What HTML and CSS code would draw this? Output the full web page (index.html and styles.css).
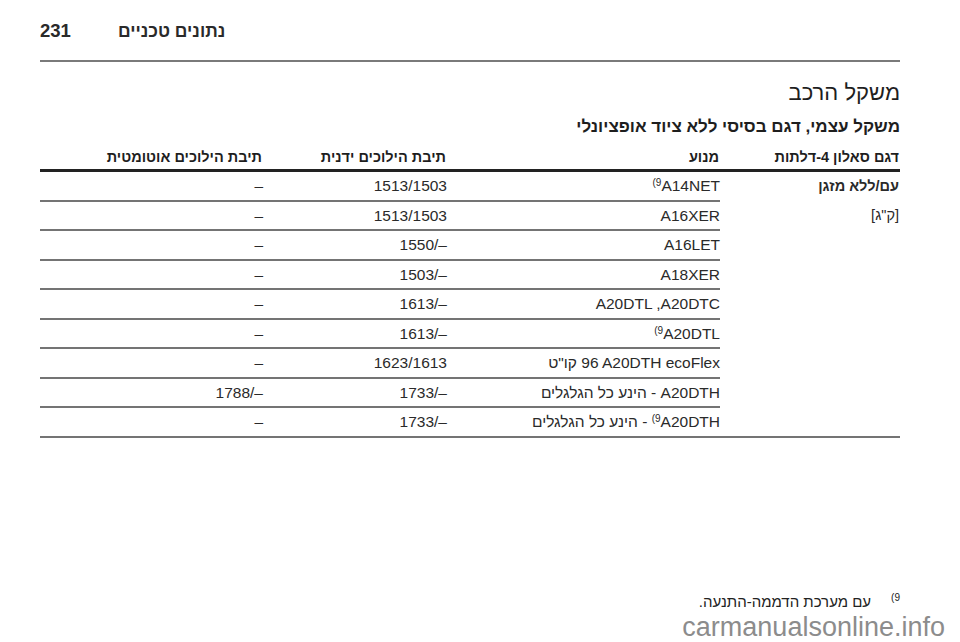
FILE: index.html
```html
<!DOCTYPE html>
<html lang="he">
<head>
<meta charset="utf-8">
<title>נתונים טכניים</title>
<link rel="stylesheet" href="styles.css">
</head>
<body>
<div class="page">
  <header class="running-head">
    <span class="page-no">231</span>
    <span class="chapter" dir="rtl">נתונים טכניים</span>
  </header>

  <h1 class="title">משקל הרכב</h1>
  <h2 class="subtitle">משקל עצמי, דגם בסיסי ללא ציוד אופציונלי</h2>

  <table class="weights">
    <colgroup>
      <col class="c-model">
      <col class="c-engine">
      <col class="c-manual">
      <col class="c-auto">
    </colgroup>
    <thead>
      <tr>
        <th>דגם סאלון 4-דלתות</th>
        <th>מנוע</th>
        <th>תיבת הילוכים ידנית</th>
        <th>תיבת הילוכים אוטומטית</th>
      </tr>
    </thead>
    <tbody>
      <tr>
        <td class="model" rowspan="9"><span class="model-name">עם/ללא מזגן</span><br>[ק"ג]</td>
        <td><span class="ltr"><sup>(9</sup>A14NET</span></td>
        <td><span class="ltr">1513/1503</span></td>
        <td>–</td>
      </tr>
      <tr>
        <td><span class="ltr">A16XER</span></td>
        <td><span class="ltr">1513/1503</span></td>
        <td>–</td>
      </tr>
      <tr>
        <td><span class="ltr">A16LET</span></td>
        <td><span class="ltr">1550/–</span></td>
        <td>–</td>
      </tr>
      <tr>
        <td><span class="ltr">A18XER</span></td>
        <td><span class="ltr">1503/–</span></td>
        <td>–</td>
      </tr>
      <tr>
        <td><span class="ltr">A20DTL ,A20DTC</span></td>
        <td><span class="ltr">1613/–</span></td>
        <td>–</td>
      </tr>
      <tr>
        <td><span class="ltr"><sup>(9</sup>A20DTL</span></td>
        <td><span class="ltr">1613/–</span></td>
        <td>–</td>
      </tr>
      <tr>
        <td><span class="ltr">96 A20DTH ecoFlex</span> קו"ט</td>
        <td><span class="ltr">1623/1613</span></td>
        <td>–</td>
      </tr>
      <tr>
        <td><span class="ltr">A20DTH</span> - הינע כל הגלגלים</td>
        <td><span class="ltr">1733/–</span></td>
        <td><span class="ltr">1788/–</span></td>
      </tr>
      <tr>
        <td><span class="ltr"><sup>(9</sup>A20DTH</span> - הינע כל הגלגלים</td>
        <td><span class="ltr">1733/–</span></td>
        <td>–</td>
      </tr>
    </tbody>
  </table>

  <div class="footnote">
    <span class="fn-mark ltr">(9</span>
    <span class="fn-text">עם מערכת הדממה-התנעה.</span>
  </div>
</div>
<div class="watermark">carmanualsonline.info</div>
</body>
</html>
```

FILE: styles.css
```css
html, body {
  margin: 0;
  padding: 0;
  background: #ffffff;
}

body {
  width: 960px;
  height: 642px;
  position: relative;
  overflow: hidden;
  font-family: "Liberation Sans", Arimo, "DejaVu Sans", sans-serif;
  color: #222222;
}

.page {
  padding: 0 60px 0 40px;
}

.running-head {
  display: flex;
  align-items: baseline;
  gap: 47px;
  direction: ltr;
  padding: 20px 0 18px;
  line-height: 22px;
  border-bottom: 2px solid #7a7a7a;
}

.page-no {
  font-size: 18.5px;
  font-weight: bold;
  color: #2a2a2a;
}

.chapter {
  font-size: 17.5px;
  font-weight: bold;
  color: #2a2a2a;
}

.title {
  direction: rtl;
  margin: 18px 0 0;
  font-size: 22px;
  line-height: 26px;
  font-weight: normal;
  color: #1e1e1e;
}

.subtitle {
  direction: rtl;
  margin: 10px 0 0;
  font-size: 17px;
  line-height: 22px;
  font-weight: bold;
  color: #1e1e1e;
}

.weights {
  direction: rtl;
  margin-top: 9px;
  width: 860px;
  table-layout: fixed;
  border-collapse: separate;
  border-spacing: 0;
  font-size: 15.5px;
}

.c-model { width: 180px; }
.c-engine { width: 273px; }
.c-manual { width: 184px; }
.c-auto { width: 223px; }

.weights th {
  text-align: right;
  vertical-align: bottom;
  font-size: 14.5px;
  font-weight: bold;
  line-height: 20px;
  padding: 0 1px 2px 0;
  border-bottom: 3px solid #222222;
  color: #1e1e1e;
  white-space: nowrap;
}

.weights td {
  text-align: right;
  vertical-align: middle;
  padding: 0;
  line-height: 27.5px;
  border-bottom: 2px solid #747474;
  white-space: nowrap;
  color: #2a2a2a;
}

.weights td.model {
  vertical-align: top;
  line-height: 29px;
  font-size: 14.5px;
  padding-right: 1px;
}

.model-name {
  font-weight: bold;
}

.ltr {
  direction: ltr;
  unicode-bidi: isolate;
}

sup {
  font-size: 10px;
  line-height: 0;
  vertical-align: 5px;
}

.footnote {
  direction: rtl;
  display: flex;
  align-items: flex-start;
  gap: 20px;
  margin-top: 154px;
  font-size: 15px;
  line-height: 20px;
  color: #222222;
}

.fn-mark {
  font-size: 10px;
  line-height: 12px;
}

.watermark {
  position: absolute;
  right: 15px;
  top: 612px;
  font-size: 27px;
  line-height: 30px;
  color: #8c8c8c;
  direction: ltr;
}
```
